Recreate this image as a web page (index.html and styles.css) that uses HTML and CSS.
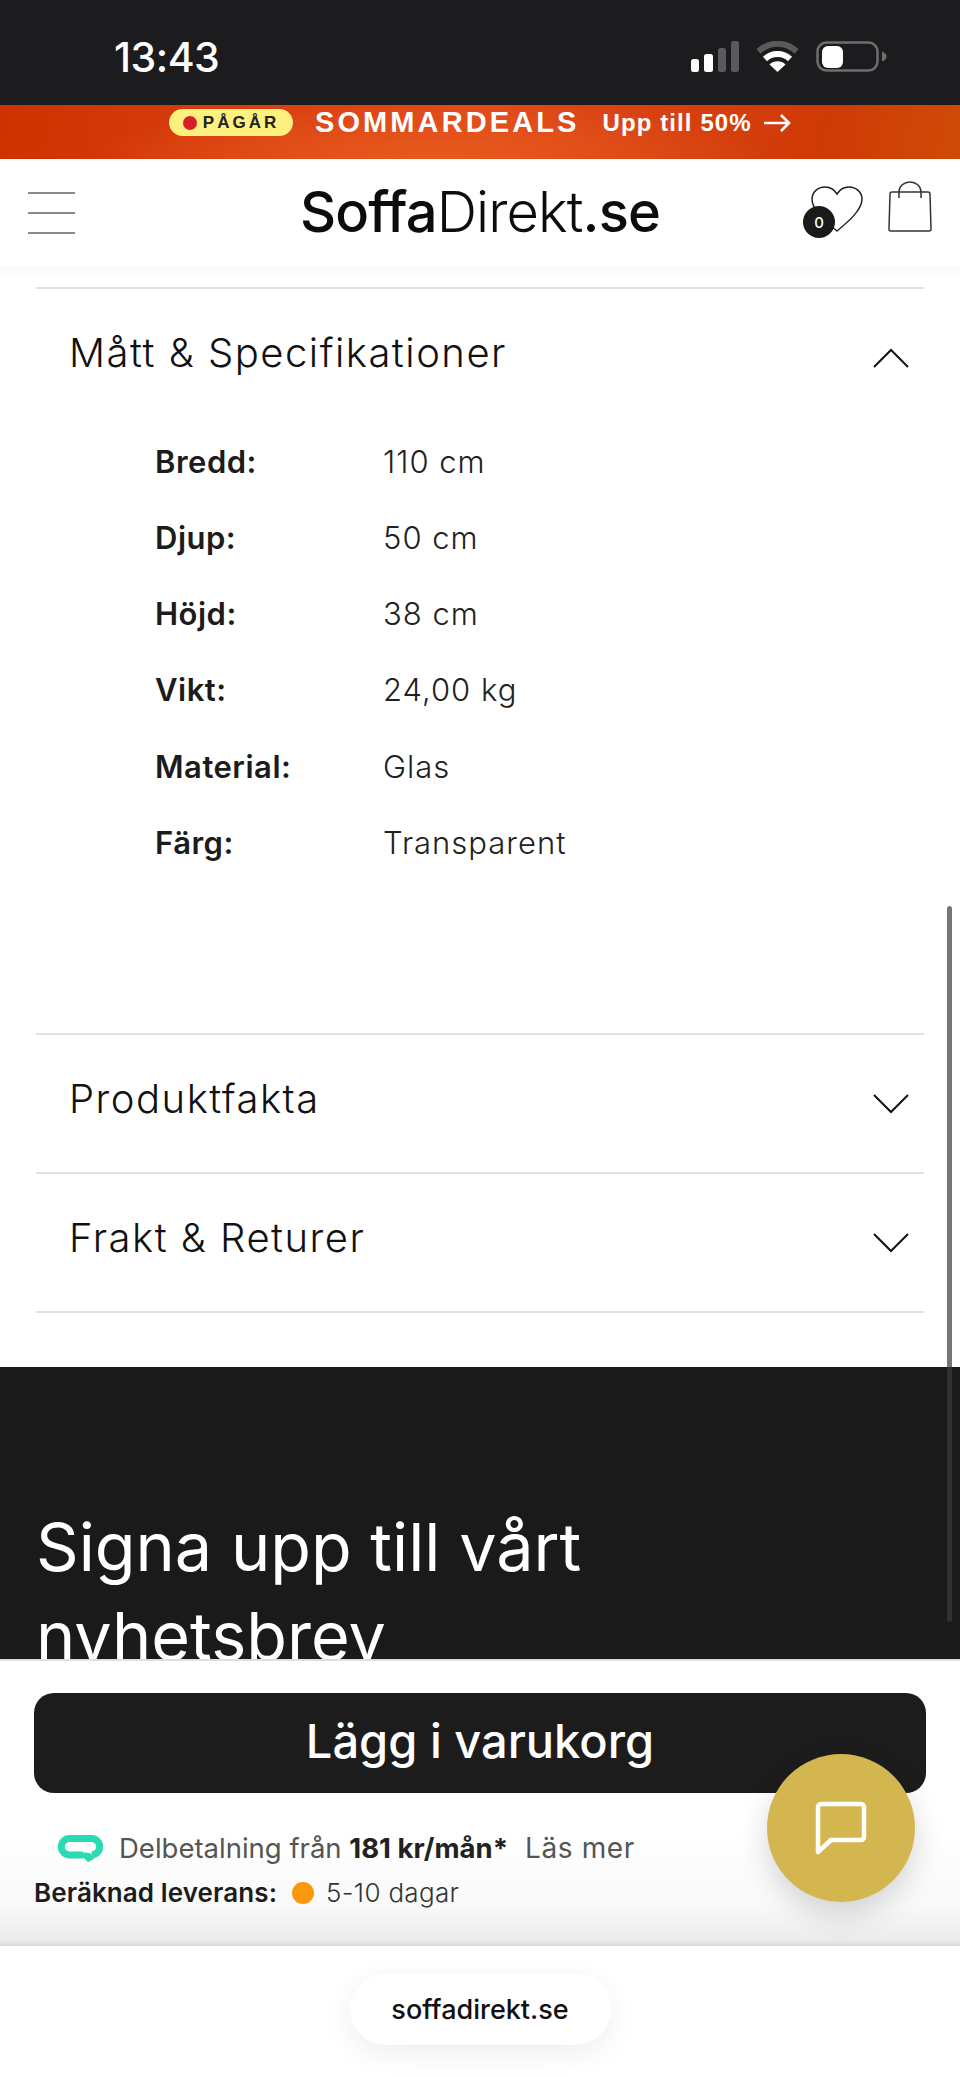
FILE: index.html
```html
<!DOCTYPE html>
<html lang="sv">
<head>
    <meta charset="UTF-8">
    <meta name="viewport" content="width=device-width, initial-scale=1.0">
    <title>SoffaDirekt.se</title>
    <link rel="stylesheet" href="styles.css">
</head>
<body>
<div class="phone">

    <div class="status">
        <span class="time">13:43</span>
        <div class="status-icons">
            <svg class="signal" width="48" height="31" viewBox="0 0 48 31">
                <rect x="0" y="18" width="8" height="13" rx="2.5" fill="#fff"/>
                <rect x="13" y="13" width="9" height="18" rx="2.5" fill="#fff"/>
                <rect x="27" y="7" width="8" height="24" rx="2.5" fill="#5a5a5c"/>
                <rect x="40" y="0" width="8" height="31" rx="2.5" fill="#5a5a5c"/>
            </svg>
            <svg class="wifi" width="43" height="31" viewBox="0 0 43 31" fill="none" stroke-width="6">
                <path d="M2.5 10.5a27 27 0 0 1 38 0" stroke="#5a5a5c"/>
                <path d="M9 18a18 18 0 0 1 25 0" stroke="#fff"/>
                <path d="M21.5 31l-8-7.500a11.500 11.500 0 0 1 16 0z" fill="#fff" stroke="none"/>
            </svg>
            <svg class="battery" width="71" height="31" viewBox="0 0 71 31">
                <rect x="1.500" y="1.500" width="60" height="28" rx="9" fill="none" stroke="#6e6e70" stroke-width="2.500"/>
                <rect x="6" y="5" width="21" height="22" rx="6" fill="#fff"/>
                <path d="M66 10.500c3 1 4.500 3 4.500 5s-1.500 4-4.500 5z" fill="#6e6e70"/>
            </svg>
        </div>
    </div>

    <div class="promo">
        <span class="promo-pill"><i></i>PÅGÅR</span>
        <span class="promo-title">SOMMARDEALS</span>
        <span class="promo-text">Upp till 50%</span>
        <svg width="27" height="20" viewBox="0 0 27 20" fill="none" stroke="#fff" stroke-width="2.600">
            <path d="M0 10h25M17 2l8 8-8 8"/>
        </svg>
    </div>

    <header class="header">
        <div class="burger"><span></span><span></span><span></span></div>
        <div class="logo"><b>Soffa</b>Direkt<b>.se</b></div>
        <div class="header-icons">
            <div class="wish">
                <svg width="52" height="47" viewBox="0 0 52 47" fill="none" stroke="#222" stroke-width="1.500">
                    <path d="M26 45C14 35 1 24 1 13 1 6 7 1 14 1c5 0 9 2 12 7 3-5 7-7 12-7 7 0 13 5 13 12 0 11-13 22-25 32z"/>
                </svg>
                <span class="badge">0</span>
            </div>
            <svg width="44" height="51" viewBox="0 0 44 51" fill="none" stroke="#333" stroke-width="1.500">
                <path d="M4 11h36a2 2 0 0 1 2 2l1 35a2 2 0 0 1-2 2H3a2 2 0 0 1-2-2l1-35a2 2 0 0 1 2-2z"/>
                <path d="M11 17V11C11 5 16 1 22 1s11 4 11 10v6"/>
            </svg>
        </div>
    </header>

    <main class="content">
        <section class="accordion">
            <div class="acc-item">
                <div class="acc-head">
                    <h3>Mått &amp; Specifikationer</h3>
                    <svg class="chev" width="36" height="20" viewBox="0 0 36 20" fill="none" stroke="#111" stroke-width="2">
                        <path d="M1 19L18 2l17 17"/>
                    </svg>
                </div>
                <dl class="specs">
                    <dt>Bredd:</dt><dd>110 cm</dd>
                    <dt>Djup:</dt><dd>50 cm</dd>
                    <dt>Höjd:</dt><dd>38 cm</dd>
                    <dt>Vikt:</dt><dd>24,00 kg</dd>
                    <dt>Material:</dt><dd>Glas</dd>
                    <dt>Färg:</dt><dd>Transparent</dd>
                </dl>
            </div>
            <div class="acc-item">
                <div class="acc-head">
                    <h3>Produktfakta</h3>
                    <svg class="chev" width="36" height="20" viewBox="0 0 36 20" fill="none" stroke="#111" stroke-width="2">
                        <path d="M1 1l17 17L35 1"/>
                    </svg>
                </div>
            </div>
            <div class="acc-item last">
                <div class="acc-head">
                    <h3>Frakt &amp; Returer</h3>
                    <svg class="chev" width="36" height="20" viewBox="0 0 36 20" fill="none" stroke="#111" stroke-width="2">
                        <path d="M1 1l17 17L35 1"/>
                    </svg>
                </div>
            </div>
        </section>

        <section class="newsletter">
            <h2>Signa upp till vårt nyhetsbrev</h2>
        </section>

        <div class="scrollbar"></div>
    </main>

    <div class="buybar">
        <button class="buy-btn">Lägg i varukorg</button>
        <div class="finance">
            <svg width="45" height="27" viewBox="0 0 45 27" fill="none">
                <path d="M25 20H11.500a8 8 0 0 1 0-16.500h22a8 8 0 0 1 0 16.500" stroke="#2bd9b3" stroke-width="7"/>
                <path d="M19 17l11 10 6-3-4-6z" fill="#2bd9b3"/>
            </svg>
            <span class="finance-text">Delbetalning från <b>181 kr/mån*</b></span>
            <span class="finance-more">Läs mer</span>
        </div>
        <div class="delivery">
            <b>Beräknad leverans:</b>
            <i></i>
            <span>5-10 dagar</span>
        </div>
    </div>

    <footer class="browser">
        <div class="url">soffadirekt.se</div>
    </footer>

    <button class="chat">
        <svg width="56" height="56" viewBox="0 0 56 56" fill="none" stroke="#fff" stroke-width="4.500" stroke-linejoin="round">
            <path d="M8 4h40a3 3 0 0 1 3 3v30a3 3 0 0 1-3 3H18L5 52V7a3 3 0 0 1 3-3z"/>
        </svg>
    </button>

</div>
</body>
</html>
```

FILE: styles.css
```css
* {
    box-sizing: border-box;
}

body {
    margin: 0;
    background: #fff;
}

.phone {
    position: relative;
    width: 960px;
    height: 2077px;
    display: flex;
    flex-direction: column;
    overflow: hidden;
    font-family: "Inter", "Liberation Sans", sans-serif;
    color: #111;
}

/* status bar */
.status {
    height: 105px;
    flex: none;
    background: #1c1c1e;
    display: flex;
    align-items: center;
    justify-content: space-between;
    padding: 8px 73px 0 114px;
}

.time {
    color: #fff;
    font-size: 41px;
    font-weight: 500;
    letter-spacing: -0.5px;
}

.status-icons {
    display: flex;
    align-items: center;
    gap: 17px;
}

/* promo band */
.promo {
    height: 54px;
    flex: none;
    display: flex;
    align-items: center;
    padding: 0 0 19px 169px;
    color: #fff;
    font-family: "Liberation Sans", Arial, sans-serif;
    font-weight: 700;
    background:
        radial-gradient(ellipse 340px 60px at 45% 100%, #e85a1c 0%, rgba(232, 90, 28, 0) 100%),
        linear-gradient(100deg, #cf3200 0%, #e0481e 50%, #cf3a06 85%, #cf4a08 100%);
}

.promo-pill {
    width: 124px;
    height: 27px;
    border-radius: 14px;
    background: #fdf07f;
    color: #222;
    font-size: 17px;
    letter-spacing: 3px;
    display: flex;
    align-items: center;
    justify-content: center;
    gap: 6px;
}

.promo-pill i {
    width: 14px;
    height: 14px;
    border-radius: 50%;
    background: #d81f26;
}

.promo-title {
    margin-left: 22px;
    font-size: 29px;
    letter-spacing: 3.1px;
}

.promo-text {
    margin-left: 23px;
    font-size: 24px;
    letter-spacing: 1.1px;
}

.promo svg {
    margin-left: 12px;
}

/* header */
.header {
    position: relative;
    height: 107px;
    flex: none;
    background: #fff;
    display: flex;
    align-items: center;
    justify-content: center;
    box-shadow: 0 6px 10px rgba(0, 0, 0, 0.03);
    z-index: 2;
}

.burger {
    position: absolute;
    left: 28px;
    top: 33px;
    width: 47px;
    display: flex;
    flex-direction: column;
    gap: 18px;
}

.burger span {
    height: 2px;
    background: #8a8a8a;
}

.logo {
    font-family: "Inter", sans-serif;
    font-size: 56px;
    font-weight: 300;
    letter-spacing: -0.9px;
    color: #0c0c0c;
    padding-bottom: 2px;
}

.logo b {
    font-weight: 500;
}

.header-icons {
    position: absolute;
    right: 28px;
    top: 22px;
    display: flex;
    align-items: flex-start;
    gap: 25px;
}

.wish {
    position: relative;
    margin-top: 5px;
}

.badge {
    position: absolute;
    left: -8px;
    top: 20px;
    width: 32px;
    height: 32px;
    border-radius: 50%;
    background: #1a1a1a;
    color: #fff;
    font-size: 15px;
    font-weight: 500;
    display: flex;
    align-items: center;
    justify-content: center;
}

/* page content */
.content {
    position: relative;
    flex: 1;
    min-height: 0;
    overflow: hidden;
    background: #fff;
}

.accordion {
    padding: 21px 36px 54px;
}

.acc-item {
    border-top: 2px solid #e3e1de;
}

.acc-item.last {
    border-bottom: 2px solid #e3e1de;
}

.acc-head {
    height: 137px;
    display: flex;
    align-items: center;
    justify-content: space-between;
    padding: 0 15px 0 33px;
}

.acc-head h3 {
    margin: 0 0 10px;
    font-size: 40px;
    font-weight: 300;
    letter-spacing: 1.5px;
}

.specs {
    margin: 0;
    padding: 0 0 156px 119px;
    display: grid;
    grid-template-columns: 228px 1fr;
    grid-auto-rows: 70px;
    row-gap: 6.3px;
    align-items: center;
    font-size: 31px;
}

.specs dt {
    font-weight: 600;
    color: #1c1c1c;
    letter-spacing: 0.5px;
}

.specs dd {
    margin: 0;
    font-weight: 300;
    color: #222;
    letter-spacing: 1px;
}

.newsletter {
    height: 400px;
    padding: 136px 36px 0;
    background: #1a1a1a;
    color: #fff;
}

.newsletter h2 {
    margin: 0;
    width: 620px;
    font-size: 66.5px;
    line-height: 89px;
    font-weight: 400;
}

.scrollbar {
    position: absolute;
    left: 947px;
    top: 640px;
    width: 5px;
    height: 716px;
    border-radius: 3px;
    background: rgba(60, 60, 60, 0.7);
}

/* sticky buy bar */
.buybar {
    height: 287px;
    flex: none;
    border-top: 2px solid #dedede;
    padding: 32px 34px 0;
    background: linear-gradient(#fff 0, #fff 170px, #f9f9f9 245px, #ececec 278px, #dcdcdc 100%);
}

.buy-btn {
    display: block;
    width: 892px;
    height: 100px;
    border: 0;
    border-radius: 20px;
    padding-bottom: 6px;
    background: #1c1c1c;
    color: #fff;
    font-family: inherit;
    font-size: 47px;
    font-weight: 500;
}

.finance {
    display: flex;
    align-items: center;
    margin: 38px 0 0 24px;
    font-size: 27.5px;
    color: #555;
}

.finance-text {
    margin-left: 16px;
}

.finance-text b {
    font-weight: 700;
    color: #222;
}

.finance-more {
    margin-left: 17px;
    font-size: 28px;
    letter-spacing: 0.6px;
}

.delivery {
    display: flex;
    align-items: center;
    margin-top: 12px;
    font-size: 26px;
}

.delivery b {
    font-weight: 600;
    color: #1c1c1c;
    letter-spacing: 0.1px;
}

.delivery i {
    width: 22px;
    height: 22px;
    border-radius: 50%;
    background: #f9980a;
    margin: 0 12px 0 15px;
}

.delivery span {
    font-weight: 300;
    color: #333;
    letter-spacing: 0.3px;
}

/* browser address bar */
.browser {
    height: 131px;
    flex: none;
    background: #fff;
    display: flex;
    justify-content: center;
    padding-top: 28px;
}

.url {
    width: 261px;
    height: 71px;
    border-radius: 36px;
    background: #fff;
    box-shadow: 0 8px 30px rgba(0, 0, 0, 0.07);
    display: flex;
    align-items: center;
    justify-content: center;
    font-size: 27px;
    font-weight: 500;
}

.chat {
    position: absolute;
    left: 767px;
    top: 1754px;
    width: 148px;
    height: 148px;
    border: 0;
    border-radius: 50%;
    background: #d4b651;
    box-shadow: 0 12px 30px rgba(0, 0, 0, 0.16);
    display: flex;
    align-items: center;
    justify-content: center;
}
```
